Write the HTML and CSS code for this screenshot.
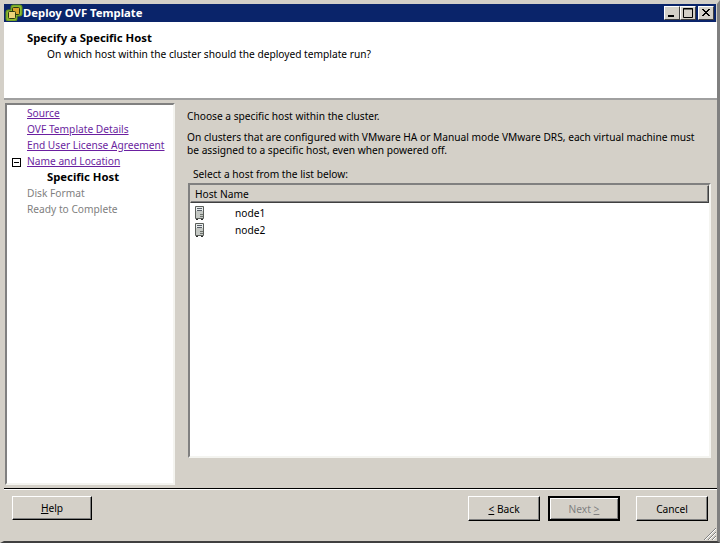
FILE: index.html
```html
<!DOCTYPE html>
<html lang="en">
<head>
<meta charset="utf-8">
<title>Deploy OVF Template</title>
<link rel="stylesheet" href="styles.css">
</head>
<body>
<div class="window">
  <div class="titlebar">
    <svg class="app-icon" width="18" height="17" viewBox="0 0 18 17">
      <path d="M8 1h7q2 0 2 2v7q0 2-2 2h-3v3q0 2-2 2H3q-2 0-2-2V8q0-2 2-2h3V3q0-2 2-2z" fill="#8dbb2e" stroke="#5f8f1c"/>
      <path d="M8.5 3.500h5q1 0 1 1v5q0 1-1 1h-5q-1 0-1-1v-5q0-1 1-1z" fill="#d9a32c" stroke="#2c3a10"/>
      <path d="M4.500 7.500h5q1 0 1 1v5q0 1-1 1h-5q-1 0-1-1v-5q0-1 1-1z" fill="#ecd27a" stroke="#2c3a10"/>
    </svg>
    <span class="title-text">Deploy OVF Template</span>
    <div class="win-buttons">
      <div class="win-btn"><svg width="14" height="12" viewBox="0 0 14 12"><rect x="3" y="8" width="6" height="2" fill="#000"/></svg></div>
      <div class="win-btn"><svg width="14" height="12" viewBox="0 0 14 12"><path d="M2.500 1.500h9v9h-9zM2 2h10" fill="none" stroke="#000"/></svg></div>
      <div class="win-btn win-btn-close"><svg width="14" height="12" viewBox="0 0 14 12"><path d="M3 2l7 7M4 2l7 7M10 2l-7 7M11 2l-7 7" stroke="#000" fill="none"/></svg></div>
    </div>
  </div>
  <div class="header">
    <h1 class="header-title">Specify a Specific Host</h1>
    <p class="header-sub">On which host within the cluster should the deployed template run?</p>
  </div>
  <div class="content">
    <nav class="steps">
      <a class="step link">Source</a>
      <a class="step link">OVF Template Details</a>
      <a class="step link">End User License Agreement</a>
      <div class="step-tree"><span class="minus"></span><a class="step link">Name and Location</a></div>
      <div class="step current">Specific Host</div>
      <div class="step muted">Disk Format</div>
      <div class="step muted">Ready to Complete</div>
    </nav>
    <main class="main">
      <p class="intro">Choose a specific host within the cluster.</p>
      <p class="desc">On clusters that are configured with VMware HA or Manual mode VMware DRS, each virtual machine must be assigned to a specific host, even when powered off.</p>
      <p class="select-label">Select a host from the list below:</p>
      <div class="list">
        <div class="list-head">Host Name</div>
        <div class="list-row">
          <svg class="server" width="10" height="15" viewBox="0 0 10 15"><path d="M.5.5h8v12h-8z" fill="#c4c8c4" stroke="#5a5e5a"/><path d="M1 1h7v4H1z" fill="#e8ecec"/><path d="M2 2.500h5M2 4.500h5" stroke="#5a6068"/><path d="M5 8.500h3M5 10.500h3" stroke="#70746e"/><path d="M1 13.500h2M6 13.500h2" stroke="#2c2c2c"/></svg>
          <span>node1</span>
        </div>
        <div class="list-row">
          <svg class="server" width="10" height="15" viewBox="0 0 10 15"><path d="M.5.5h8v12h-8z" fill="#c4c8c4" stroke="#5a5e5a"/><path d="M1 1h7v4H1z" fill="#e8ecec"/><path d="M2 2.500h5M2 4.500h5" stroke="#5a6068"/><path d="M5 8.500h3M5 10.500h3" stroke="#70746e"/><path d="M1 13.500h2M6 13.500h2" stroke="#2c2c2c"/></svg>
          <span>node2</span>
        </div>
      </div>
    </main>
  </div>
  <div class="footer">
    <button class="btn btn-help"><span class="ul">H</span>elp</button>
    <div class="footer-right">
      <button class="btn"><span class="ul">&lt;</span> Back</button>
      <button class="btn btn-default" disabled>Next <span class="ul">&gt;</span></button>
      <button class="btn btn-cancel">Cancel</button>
    </div>
  </div>
  <svg class="grip" width="14" height="14" viewBox="0 0 14 14"><path d="M13 1L1 13M13 5L5 13M13 9L9 13" stroke="#808080" fill="none"/><path d="M13 2L2 13M13 6L6 13M13 10L10 13" stroke="#fff" fill="none"/></svg>
</div>
</body>
</html>
```
FILE: styles.css
```css
* { box-sizing: border-box; }
html, body { margin: 0; padding: 0; }
body { width: 720px; height: 543px; overflow: hidden; font-family: "Noto Sans", sans-serif; font-size: 10.2px; color: #000; }
p, h1 { margin: 0; font-weight: normal; }
.window { position: relative; width: 720px; height: 543px; background: #d4d0c8; border-style: solid; border-width: 4px 3px 2px 4px; border-color: #d4d0c8 #808080 #404040 #d4d0c8; display: flex; flex-direction: column; }
.titlebar { height: 18px; flex: none; background: #0a246a; color: #fff; display: flex; align-items: center; margin-right: 1px; padding-left: 1px; }
.app-icon { flex: none; margin-top: -1px; }
.title-text { font-weight: bold; font-size: 11.3px; line-height: 16px; margin-left: 0; }
.win-buttons { margin-left: auto; display: flex; padding-right: 2px; }
.win-btn { width: 16px; height: 14px; background: #d4d0c8; border: 1px solid; border-color: #fff #404040 #404040 #fff; display: flex; align-items: center; justify-content: center; }
.win-btn-close { margin-left: 2px; }
.header { height: 78px; flex: none; background: #fff; border-bottom: 2px solid #a0a0a0; padding: 9px 0 0 23px; }
.header-title { font-size: 11.3px; font-weight: bold; line-height: 13px; }
.header-sub { line-height: 13px; margin: 4px 0 0 20px; }
.content { flex: 1; display: flex; padding: 3px 6px 3px 1px; min-height: 0; }
.steps { width: 170px; flex: none; background: #fff; border: 2px solid; border-color: #808080 #f4f4f0 #f4f4f0 #808080; padding: 1px 0 0 20px; display: flex; flex-direction: column; }
.step { height: 16px; line-height: 15px; display: block; white-space: nowrap; }
.link { color: #6b1fa0; text-decoration: underline; }
.step-tree { height: 16px; display: flex; align-items: center; margin-left: -15px; }
.minus { width: 9px; height: 9px; border: 1px solid #000; margin-right: 6px; flex: none; background: linear-gradient(#000, #000) center / 5px 1px no-repeat; }
.current { font-weight: bold; padding-left: 20px; font-size: 11.3px; line-height: 14px; }
.muted { color: #808080; }
.main { flex: 1; padding: 7px 0 0 12px; display: flex; flex-direction: column; min-width: 0; }
.intro { line-height: 13px; }
.desc { line-height: 13px; margin-top: 8px; width: 510px; }
.select-label { line-height: 13px; margin: 11px 0 0 6px; }
.list { margin: 2px 0 27px 1px; flex: 1; background: #fff; border: 2px solid; border-color: #808080 #f4f4f0 #f4f4f0 #808080; }
.list-head { height: 18px; margin-bottom: 2px; background: #d4d0c8; border: 1px solid; border-color: #d4d0c8 #404040 #404040 #d4d0c8; line-height: 17px; padding-left: 4px; box-shadow: inset -1px -1px #808080; }
.list-row { height: 17px; display: flex; align-items: center; padding-left: 5px; }
.list-row span { margin-left: 30px; line-height: 19px; }
.server { flex: none; }
.footer { height: 53px; flex: none; border-top: 1px solid #000; box-shadow: inset 0 1px #fff; padding: 7px 9px 0 8px; display: flex; align-items: flex-start; }
.footer-right { margin-left: auto; display: flex; }
.btn { height: 25px; width: 72px; padding: 0; margin: 0; font: inherit; color: #000; background: #d4d0c8; border: 1px solid; border-color: #fff #000 #000 #fff; box-shadow: inset -1px -1px #808080; }
.btn-help { width: 80px; height: 24px; }
.btn-default { margin-left: 8px; border: 2px solid #000; color: #808080; box-shadow: inset 1px 1px #fff, inset -1px -1px #808080; }
.btn-cancel { margin-left: 16px; }
.ul { text-decoration: underline; }
.grip { position: absolute; right: 0; bottom: 0; }
```
